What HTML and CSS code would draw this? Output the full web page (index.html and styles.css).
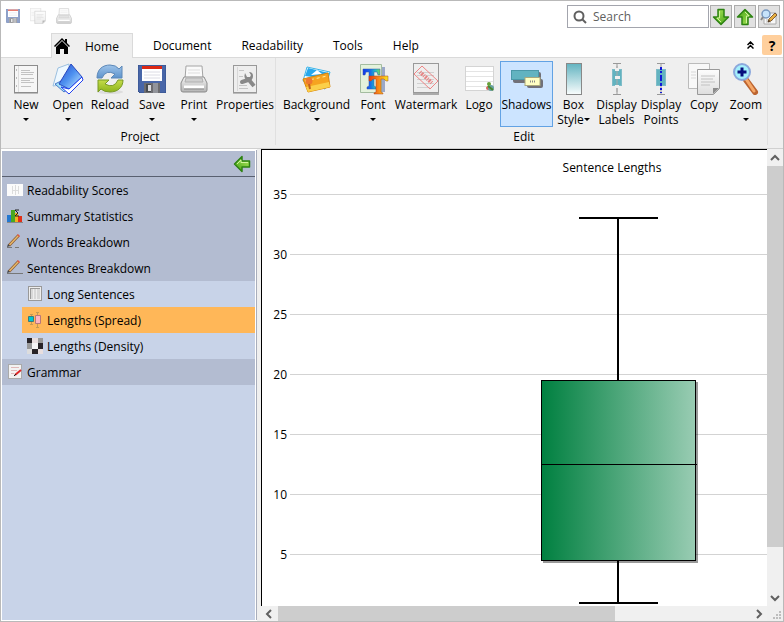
FILE: index.html
```html
<!DOCTYPE html>
<html lang="en">
<head>
<meta charset="utf-8">
<title>Sentence Lengths</title>
<link rel="stylesheet" href="styles.css">
</head>
<body>
<svg class="defs" aria-hidden="true">
  <defs>
    <linearGradient id="teal" x1="0" y1="0" x2="0" y2="1"><stop offset="0" stop-color="#62b3c0"/><stop offset="1" stop-color="#fafdfd"/></linearGradient>
    <linearGradient id="paper" x1="0" y1="0" x2="0" y2="1"><stop offset="0" stop-color="#fdfdfd"/><stop offset="1" stop-color="#dedede"/></linearGradient>
    <linearGradient id="grey" x1="0" y1="0" x2="0" y2="1"><stop offset="0" stop-color="#f4f4f4"/><stop offset="1" stop-color="#b4b4b4"/></linearGradient>
    <linearGradient id="cover" x1="0" y1="0" x2="1" y2="1"><stop offset="0" stop-color="#2448cc"/><stop offset=".5" stop-color="#4f92f0"/><stop offset="1" stop-color="#c8ecff"/></linearGradient>
    <linearGradient id="blue" x1="0" y1="0" x2="0" y2="1"><stop offset="0" stop-color="#9fc4ea"/><stop offset="1" stop-color="#5d93cc"/></linearGradient>
    <linearGradient id="lime" x1="0" y1="0" x2="0" y2="1"><stop offset="0" stop-color="#c5dc4a"/><stop offset="1" stop-color="#8db41c"/></linearGradient>
    <linearGradient id="leaf" x1="0" y1="0" x2="1" y2="1"><stop offset="0" stop-color="#b4ec62"/><stop offset="1" stop-color="#3fa010"/></linearGradient>
    <linearGradient id="rainbow" x1="0" y1="0" x2="1" y2="0"><stop offset="0" stop-color="#1038e8"/><stop offset=".45" stop-color="#1870e8"/><stop offset=".7" stop-color="#20b8c8"/><stop offset="1" stop-color="#70d860"/></linearGradient>
    <linearGradient id="flame" x1="0" y1="0" x2="1" y2="0"><stop offset="0" stop-color="#e83810"/><stop offset=".5" stop-color="#f88818"/><stop offset="1" stop-color="#f8e820"/></linearGradient>
    <linearGradient id="box" x1="0" y1="0" x2="1" y2="0"><stop offset="0" stop-color="#008040"/><stop offset="1" stop-color="#99ccb3"/></linearGradient>
    <symbol id="floppy" viewBox="0 0 28 28">
      <path d="M0 0h28v28H2l-2-2z" fill="#4866a8"/><path d="M0 0h28v28H2l-2-2z" fill="none" stroke="#34508c"/>
      <rect x="4" y="1" width="20" height="15" fill="#fff"/><rect x="4" y="1" width="20" height="3" fill="#dc2814"/>
      <path d="M6 7h16M6 10h16M6 13h16" stroke="#dcdce4"/>
      <rect x="6" y="18" width="16" height="10" fill="#6c6c70"/><rect x="8" y="19" width="5" height="8" fill="#484c50"/><rect x="10" y="20" width="3" height="6" fill="#dcdce0"/><rect x="15" y="18" width="5" height="10" fill="#92949a"/>
    </symbol>
    <symbol id="printer" viewBox="0 0 28 28">
      <path d="M6 1h16l1 13H5z" fill="#fafafa" stroke="#a4a4a4"/><path d="M8 5h12M8 8h12" stroke="#ddd"/>
      <path d="M4 12h20l3 6v7q0 2-2 2H3q-2 0-2-2v-7z" fill="url(#grey)" stroke="#8c8c8c"/>
      <path d="M6 13h16l1 4H5z" fill="#d0d0d0" stroke="#b0b0b0"/><path d="M4 22h20" stroke="#fff" stroke-width="3"/><path d="M4 24h20" stroke="#888"/>
    </symbol>
    <symbol id="copy" viewBox="0 0 32 32">
      <path d="M.5.500h21v25H.500z" fill="#f8f8f8" stroke="#bbb"/><path d="M3 9h5M3 12h5M3 15h5" stroke="#d8d8d8"/>
      <path d="M9.500 6.500h22v19l-6 6h-16z" fill="url(#paper)" stroke="#999"/><path d="M13 13h14M13 16h12M13 19h14M13 22h9" stroke="#c2c2c2"/>
      <path d="M25 31v-6h6z" fill="#8c8c8c"/>
    </symbol>
    <symbol id="arrow" viewBox="0 0 18 18">
      <path d="M9 16.500 1.500 9H6V1.500h6V9h4.500z" fill="url(#leaf)" stroke="#2d8212" stroke-width="1.500" stroke-linejoin="round"/><path d="M7.500 3v7H5l4 4" fill="none" stroke="#d0f49c"/>
    </symbol>
    <symbol id="pencil" viewBox="0 0 16 16">
      <path d="m2 11.500 9.500-10" stroke="#8a5c38" stroke-width="3"/><path d="m2.500 11 9-9.500" stroke="#e8b868" stroke-width="1.500"/><path d="m11 2 1-1" stroke="#e05840" stroke-width="3"/><path d="m0 13 1-3 2 2z" fill="#444"/>
    </symbol>
    <symbol id="plot" viewBox="0 0 12 32">
      <path d="M6 0v32M2 .500h8M2 31.500h8" stroke="#999"/><rect x="1.500" y="6.500" width="9" height="16" fill="#62b3c0" stroke="#7fbcc8"/>
    </symbol>
  </defs>
</svg>
<div class="window">
  <header class="titlebar">
    <div class="quick">
      <button aria-label="Save"><svg width="14" height="14"><use href="#floppy"/></svg></button>
      <button aria-label="Copy"><svg width="16" height="16"><use href="#copy"/></svg></button>
      <button aria-label="Print"><svg width="16" height="16"><use href="#printer"/></svg></button>
    </div>
    <div class="tools">
      <label class="search">
        <svg width="14" height="14" viewBox="0 0 14 14"><circle cx="6" cy="6" r="4.500" fill="none" stroke="#606060" stroke-width="2"/><path d="m9 9 4 4" stroke="#606060" stroke-width="2"/></svg>
        <input type="text" placeholder="Search" aria-label="Search">
      </label>
      <button class="tool" aria-label="Find next"><svg width="18" height="18"><use href="#arrow"/></svg></button>
      <button class="tool up" aria-label="Find previous"><svg width="18" height="18"><use href="#arrow"/></svg></button>
      <button class="tool" aria-label="Search options"><svg width="18" height="18" viewBox="0 0 18 18"><path d="M4 5h12v11H4z" fill="#f8f8f8" stroke="#aaa"/><path d="M6 12h7M6 14h5" stroke="#bbb"/><circle cx="6" cy="6" r="4" fill="#c6e2fa" stroke="#7898c0" stroke-width="1.500"/><path d="m3 9-2 3" stroke="#888" stroke-width="2"/><path d="m8 14 1-3 6-6 2 2-6 6z" fill="#e8b040" stroke="#664020" stroke-width=".800"/><path d="m8 14 1-2 1 1z" fill="#222"/></svg></button>
    </div>
  </header>
  <div class="tabrow">
    <nav class="tabs">
      <a href="#" class="tab current"><svg width="16" height="16" viewBox="0 0 16 16"><path d="M8 0 0 8l1 1 7-7 7 7 1-1-3-3V1h-2v2z"/><path d="M8 3 2 9v7h4v-5h4v5h4V9z"/></svg>Home</a>
      <a href="#" class="tab">Document</a>
      <a href="#" class="tab">Readability</a>
      <a href="#" class="tab">Tools</a>
      <a href="#" class="tab">Help</a>
    </nav>
    <button class="collapse" aria-label="Collapse ribbon"><svg width="7" height="8" viewBox="0 0 7 8"><path d="m.500 4 3-3 3 3M.500 7.500l3-3 3 3" fill="none" stroke="#000" stroke-width="1.500"/></svg></button>
    <button class="help">?</button>
  </div>
  <div class="ribbon">
    <section class="group project">
      <div class="commands">
        <button class="command menu"><svg width="32" height="32" viewBox="0 0 32 32"><path d="M4 30h24" stroke="#bbb" stroke-width="2"/><rect x="4.500" y="2.500" width="23" height="27" fill="#f6f6f6" stroke="#8c8c8c"/><path d="M8.500 3v26" stroke="#ddd"/><path d="M6.500 6v20" stroke="#bbb" stroke-dasharray="2 6"/><path d="M11 7.500h9M11 9.500h13M11 11.500h12M11 15.500h13M11 17.500h9M11 19.500h13M11 23.500h10" stroke="#c2c2c2"/></svg>New</button>
        <button class="command menu"><svg width="32" height="32" viewBox="0 0 32 32"><path d="M6 5 17 1v20L1 23z" fill="#eef8ff" stroke="#9cc0e0"/><path d="m3 21 9 8 4-3-5-9z" fill="#a4e4f8" stroke="#4878c8"/><path d="M19 1 30 14 17 26 7 21z" fill="url(#cover)" stroke="#2848c0"/><path d="m17 26 13-12 1 3-14 14-8-7z" fill="#fff" stroke="#2040f0"/></svg>Open</button>
        <button class="command"><svg width="32" height="32" viewBox="0 0 32 32"><ellipse cx="16" cy="29" rx="13" ry="2" fill="#ddd"/><path d="M3 15C3 6 9 2 16 2q6 0 9 4l3-3v12H17l4-4q-9-5-13 4z" fill="url(#blue)" stroke="#5c88b8"/><path d="M29 17c0 8-6 12-13 12q-6 0-9-3l-3 3V17h11l-4 4q9 5 13-4z" fill="url(#lime)" stroke="#789a24"/></svg>Reload</button>
        <button class="command menu"><svg width="32" height="32" viewBox="0 0 32 32"><use href="#floppy" x="2" y="2" width="28" height="28"/></svg>Save</button>
        <button class="command menu"><svg width="32" height="32" viewBox="0 0 32 32"><use href="#printer" x="2" y="2" width="28" height="28"/></svg>Print</button>
        <button class="command"><svg width="32" height="32" viewBox="0 0 32 32"><path d="M4 30h24" stroke="#bbb" stroke-width="2"/><rect x="4.500" y="2.500" width="23" height="27" fill="#eee" stroke="#999"/><path d="M8.500 4v24" stroke="#d8d8d8"/><path d="M10 7.500h5M10 13.500h4M10 22.500h8M10 25.500h9" stroke="#c4c4c4"/><path d="m13 19 6-2" stroke="#888" stroke-width="4" stroke-linecap="round"/><path d="m20 17 5 6" stroke="#888" stroke-width="4"/><path d="M16 10q-2 6 3 8 5 0 5-5 0-4-4-4l2 3-1 2h-3z" fill="#888"/></svg>Properties</button>
      </div>
      <h2>Project</h2>
    </section>
    <section class="group edit">
      <div class="commands">
        <button class="command menu"><svg width="32" height="32" viewBox="0 0 32 32"><path d="m6 4 23 5-5 17-22-8z" fill="#fff" stroke="#38b4e8"/><path d="m7 5 21 5-2 6-22-3z" fill="#28a8ec"/><path d="m10 12 6-5 5 4z" fill="#fff"/><path d="m2 16 25-6 2 14-22 5z" fill="#f6a420" stroke="#d8860c"/><path d="m5 24 23-5 1 5-22 5z" fill="#fbd04a"/><path d="m4 18 22-5" stroke="#fff0a0" stroke-dasharray="3 3"/><circle cx="8" cy="18" r="3.500" fill="#ee7830"/><path d="m8 21 1 5" stroke="#c06020" stroke-width="2"/></svg>Background</button>
        <button class="command menu"><svg width="32" height="32" viewBox="0 0 32 32"><path d="M8 4h20v25H8z" fill="#9ba8c8"/><path d="M3.500 1.500h21v28h-21z" fill="#e4f2dc" stroke="#a4bca0"/><path d="M6 6h17v6h-2l-1-3h-3v14l2 1v2h-9v-2l2-1V9H9l-1 3H6z" fill="url(#rainbow)" stroke="#3850b0" stroke-width=".500"/><path d="M12 13h19v5h-2l-2-2h-3v13l2 1v1h-9v-1l2-1V16h-3l-2 2h-2z" fill="url(#flame)" stroke="#a84820" stroke-width=".500"/></svg>Font</button>
        <button class="command"><svg width="32" height="32" viewBox="0 0 32 32"><path d="M3 31h26" stroke="#aaa" stroke-width="2"/><rect x="3.500" y=".500" width="25" height="29" fill="#eee" stroke="#999"/><path d="M7 9.500h17M7 12.500h17M7 16.500h17M7 20.500h17M7 24.500h13" stroke="#d0d0d0"/><path d="m4 11 8-8 16 15-8 8z" fill="none" stroke="#ee8484"/><path d="m10 9 12 11" stroke="#e88484" stroke-width="4" stroke-dasharray="1 1 2 1"/></svg>Watermark</button>
        <button class="command"><svg width="32" height="32" viewBox="0 0 32 32"><rect x="2.500" y="3.500" width="28" height="24" fill="#fff" stroke="#d4d4d4"/><path d="M3 8.500h27M3 13.500h27M3 18.500h27M3 23.500h20" stroke="#e4e4e4"/><circle cx="26" cy="21" r="2" fill="#68a038"/><circle cx="25" cy="25" r="2" fill="#d86860"/><circle cx="28" cy="25" r="3" fill="#68a0a0"/><path d="m25 23 5 4" stroke="#48882c" stroke-width="2"/></svg>Logo</button>
        <button class="command pressed" aria-pressed="true"><svg width="32" height="32" viewBox="0 0 32 32"><rect x="2" y="9" width="28" height="11" rx="2" fill="#707078"/><rect x="16" y="16" width="16" height="9" rx="2" fill="#707078"/><rect x=".500" y="7.500" width="27" height="9" fill="#62b3c0" stroke="#4b98a8"/><rect x="14" y="14.500" width="15" height="8" fill="#ffffc4" stroke="#aaa87c"/><path d="M19 18.500h6" stroke="#888" stroke-width="2" stroke-dasharray="1 1"/></svg>Shadows</button>
        <button class="command"><svg width="32" height="32" viewBox="0 0 32 32"><rect x="8.500" y=".500" width="15" height="31" fill="url(#teal)" stroke="#888"/></svg><span>Box</span><span class="inline-menu">Style</span></button>
        <button class="command"><svg width="32" height="32" viewBox="0 0 32 32"><use href="#plot" x="10" width="12" height="32"/><path d="M16 3v26" stroke="#aaa"/><path d="M14 6.500h4M14 14.500h5M14 23.500h4" stroke="#f0f0f0" stroke-width="3"/></svg><span>Display</span><span>Labels</span></button>
        <button class="command"><svg width="32" height="32" viewBox="0 0 32 32"><use href="#plot" x="10" width="12" height="32"/><path d="M16 4v3m0 1v2m0 2v6m0 2v3m0 2v2m0 2v1" stroke="#1018d8" stroke-width="2"/></svg><span>Display</span><span>Points</span></button>
        <button class="command"><svg width="32" height="32"><use href="#copy"/></svg>Copy</button>
        <button class="command menu"><svg width="32" height="32" viewBox="0 0 32 32"><path d="m16 17 9 12" stroke="#bc6430" stroke-width="6" stroke-linecap="round"/><path d="m16 16 8 12" stroke="#f6a868" stroke-width="3" stroke-linecap="round"/><circle cx="12" cy="9" r="8" fill="#a4f0fc" stroke="#8ca8dc" stroke-width="2"/><path d="M12 4.500v9M7.500 9h9" stroke="#08107c" stroke-width="3"/></svg>Zoom</button>
      </div>
      <h2>Edit</h2>
    </section>
  </div>
  <main class="work">
    <aside class="sidebar">
      <div class="side-head"><button aria-label="Hide pane"><svg class="back" width="18" height="18"><use href="#arrow"/></svg></button></div>
      <nav>
        <a href="#" class="item"><svg width="16" height="16" viewBox="0 0 16 16"><rect y="2" width="16" height="12" fill="#fbfbfb"/><path d="M5.500 4v8M8.500 3v10M11.500 4v8M6 8.500h5" stroke="#ddd"/></svg>Readability Scores</a>
        <a href="#" class="item"><svg width="16" height="16" viewBox="0 0 16 16"><path d="M0 7h4v7H0z" fill="#2478d0"/><path d="M4 2h4v12H4z" fill="#48a820"/><path d="M8 5h3v9H8z" fill="#f0b020"/><path d="M11 8h4v6h-4z" fill="#e03018"/><path d="M12 2H8l3 3-3 3h4" fill="none" stroke="#222"/><path d="M0 14.500h16" stroke="#888"/></svg>Summary Statistics</a>
        <a href="#" class="item"><svg width="16" height="16" viewBox="0 0 16 16"><use href="#pencil"/><path d="M0 13.500h5M8 13.500h4" stroke="#777"/></svg>Words Breakdown</a>
        <a href="#" class="item"><svg width="16" height="16" viewBox="0 0 16 16"><use href="#pencil"/><path d="M0 13.500h16" stroke="#777"/></svg>Sentences Breakdown</a>
        <div class="sub">
          <a href="#" class="item"><svg width="16" height="16" viewBox="0 0 16 16"><rect x="1.500" y=".500" width="13" height="14" fill="#eee" stroke="#999"/><path d="M3 2h3v11H3zM7 2h2v11H7zM10 2h3v11h-3z" fill="#d8d8d8"/><path d="M3 2.500h10M3.500 3v10" stroke="#999"/></svg>Long Sentences</a>
          <a href="#" class="item selected"><svg width="16" height="16" viewBox="0 0 16 16"><path d="M4.500 2v11M10.500 0v16M3 2.500h3M9 .500h3M3 12.500h3M9 15.500h3" stroke="#c49a54"/><path d="M1.500 4.500h5v5h-5z" fill="#00c8d0" stroke="#407878"/><path d="M8.500 3.500h5v8h-5z" fill="#ffb4c0" stroke="#b87878"/></svg>Lengths (Spread)</a>
          <a href="#" class="item"><svg width="16" height="16" viewBox="0 0 16 16"><path d="M0 0h16v16H0z" fill="#999"/><path d="M0 0h5v5H0zM11 5h5v6h-5zM5 11h6v5H5z" fill="#282428"/><path d="M5 0h6v5H5zM11 11h5v5h-5z" fill="#e8dede"/><path d="M5 5h6v6H5z" fill="#f4f4f4"/><path d="M0 11h5v5H0z" fill="#ddd"/></svg>Lengths (Density)</a>
        </div>
        <a href="#" class="item"><svg width="16" height="16" viewBox="0 0 16 16"><rect x="1.500" y=".500" width="13" height="14" fill="#f2f2f2" stroke="#aaa"/><path d="M4 3.500h8M4 6.500h6M4 9.500h3" stroke="#e0b8b8"/><path d="m8 11 6-5" stroke="#e02828" stroke-width="2"/><path d="m7 12 2-2" stroke="#222"/></svg>Grammar</a>
      </nav>
    </aside>
    <section class="viewer">
      <div class="canvas">
        <svg class="chart" role="img" aria-label="Sentence Lengths">
          <path class="grid" d="M28 44.500h1200M28 104.500h1200M28 164.500h1200M28 224.500h1200M28 284.500h1200M28 344.500h1200M28 404.500h1200"/>
          <g class="axis"><text x="25" y="49">35</text><text x="25" y="109">30</text><text x="25" y="169">25</text><text x="25" y="229">20</text><text x="25" y="289">15</text><text x="25" y="349">10</text><text x="25" y="409">5</text></g>
          <text class="caption" x="350" y="22">Sentence Lengths</text>
          <path d="M317 68h79M356 68v385M317 453h79" stroke="#000" stroke-width="2"/>
          <rect x="281" y="232" width="155" height="181" fill="#000" opacity=".4"/>
          <rect x="279.500" y="230.500" width="154" height="180" fill="url(#box)" stroke="#000"/>
          <path d="M279 314.500h156" stroke="#000"/>
        </svg>
      </div>
      <div class="bar vertical">
        <svg width="16" height="17" viewBox="0 0 16 17"><path d="m4 11 4-4 4 4" /></svg>
        <div class="thumb"></div>
        <svg width="16" height="16" viewBox="0 0 16 16"><path d="m4 6 4 4 4-4" /></svg>
      </div>
      <div class="bar horizontal">
        <svg width="17" height="15" viewBox="0 0 17 15"><path d="M10 4 6 8l4 4"/></svg>
        <div class="thumb"></div>
        <svg width="16" height="15" viewBox="0 0 16 15"><path d="m6 4 4 4-4 4"/></svg>
      </div>
      <div class="grip"><svg width="9" height="9" viewBox="0 0 9 9"><path d="M6 0h2v2H6zM3 3h2v2H3zM6 3h2v2H6zM0 6h2v2H0zM3 6h2v2H3zM6 6h2v2H6z" fill="#bdbdbd"/></svg></div>
    </section>
  </main>
</div>
</body>
</html>
```
FILE: styles.css
```css
* { box-sizing: border-box; }
body { margin: 0; font: 12px/15px "Open Sans", "Noto Sans", sans-serif; color: #000; }
button, input { font: inherit; color: inherit; }
button { padding: 0; border: 0; background: none; }
a { color: inherit; text-decoration: none; }
svg { display: block; flex: none; }
.defs { position: absolute; width: 0; height: 0; }

.window { display: flex; flex-direction: column; height: 100vh; border: 1px solid #b9b9b9; background: #fff; }
.titlebar { display: flex; justify-content: space-between; height: 32px; padding: 4px 3px 0 5px; }
.quick { display: flex; align-items: center; gap: 10px; height: 22px; opacity: .6; }
.tools { display: flex; gap: 2px; }
.search { display: flex; align-items: center; gap: 6px; width: 142px; height: 23px; margin-right: -1px; padding: 0 5px; border: 1px solid #a3a5ad; }
.search input { width: 100%; min-width: 0; padding: 0; border: 0; outline: 0; background: none; }
.search input::placeholder { color: #606060; opacity: 1; }
.tool { display: grid; place-items: center; width: 22px; height: 23px; border: 1px solid #adadad; background: #e1e1e1; }
.up svg { transform: rotate(180deg); }

.tabrow { display: flex; align-items: center; height: 24px; padding-right: 1px; }
.tabs { display: flex; align-self: stretch; flex: 1; padding-left: 50px; }
.tab { display: flex; align-items: center; height: 25px; padding: 0 15px; }
.current { position: relative; gap: 15px; margin-right: 5px; padding: 0 13px 0 2px; border: 1px solid #dadada; border-bottom: 0; background: #efefef; }
.collapse { padding: 0 8px; }
.help { width: 20px; height: 20px; border-radius: 2px; background: #ffcf9c; font-weight: 700; font-size: 14px; }

.ribbon { display: flex; height: 92px; border-top: 1px solid #dadada; border-bottom: 1px solid #d0d0d0; background: #efefef; }
.group { padding: 3px 0 0 4px; border-right: 1px solid #e0e0e0; margin-bottom: 3px; }
.edit { padding-left: 5px; }
.commands { display: grid; }
.project .commands { grid-template-columns: repeat(5, 42px) 60px; }
.edit .commands { grid-template-columns: 71px 42px 64px 42px 53px 41px 45px 44px 42px 42px; }
.command { display: flex; flex-direction: column; align-items: center; height: 66px; padding-top: 1px; border: 1px solid transparent; white-space: nowrap; }
.command svg { margin-bottom: 2px; }
.menu::after { content: ""; margin-top: 6px; border: 3px solid transparent; border-top-color: #000; border-bottom: 0; }
.inline-menu { display: flex; align-items: center; }
.inline-menu::after { content: ""; border: 3px solid transparent; border-top-color: #000; border-bottom: 0; }
.pressed { border-color: #62a2e4; background: #cce4ff; }
.group h2 { margin: 2px 0 0; font: inherit; text-align: center; }

.work { display: flex; flex: 1; min-height: 0; background: #efefef; }
.sidebar { width: 256px; margin-right: 4px; padding: 1px 2px 0 0; border: 1px solid #fff; border-right: 0; background: #c8d3e8; box-shadow: inset -1px 0 #a9aebc, inset -2px 0 #fff, inset 0 1px #fff; }
.side-head { display: flex; justify-content: flex-end; align-items: center; height: 26px; padding-right: 4px; border-bottom: 1px solid #596070; background: #b3bcd1; }
.back { transform: rotate(90deg); }
.item { display: flex; align-items: center; gap: 4px; height: 26px; padding-left: 5px; background: #b3bcd1; }
.sub { padding-left: 20px; }
.sub .item { background: none; }
.sub .selected { background: #ffb758; }

.viewer { display: grid; grid-template: minmax(0, 1fr) 15px / minmax(0, 1fr) 16px; flex: 1; min-width: 0; }
.canvas { overflow: hidden; border: 1px solid #000; border-width: 1px 0 0 1px; background: #fff; }
.chart { width: 100%; height: 456px; }
.grid { stroke: #d3d3d3; }
.axis { text-anchor: end; }
.caption { text-anchor: middle; }
.bar { display: flex; background: #f0f0f0; }
.bar path { fill: none; stroke: #606060; stroke-width: 2; }
.thumb { background: #cdcdcd; }
.vertical { flex-direction: column; }
.vertical .thumb { flex: 380; }
.vertical::after { content: ""; order: 1; flex: 43; }
.vertical svg:last-of-type { order: 2; }
.horizontal .thumb { flex: 337; }
.horizontal::after { content: ""; order: 1; flex: 136; }
.horizontal svg:last-of-type { order: 2; }
.grip { display: flex; align-items: flex-end; justify-content: flex-end; padding: 1px; }
```
